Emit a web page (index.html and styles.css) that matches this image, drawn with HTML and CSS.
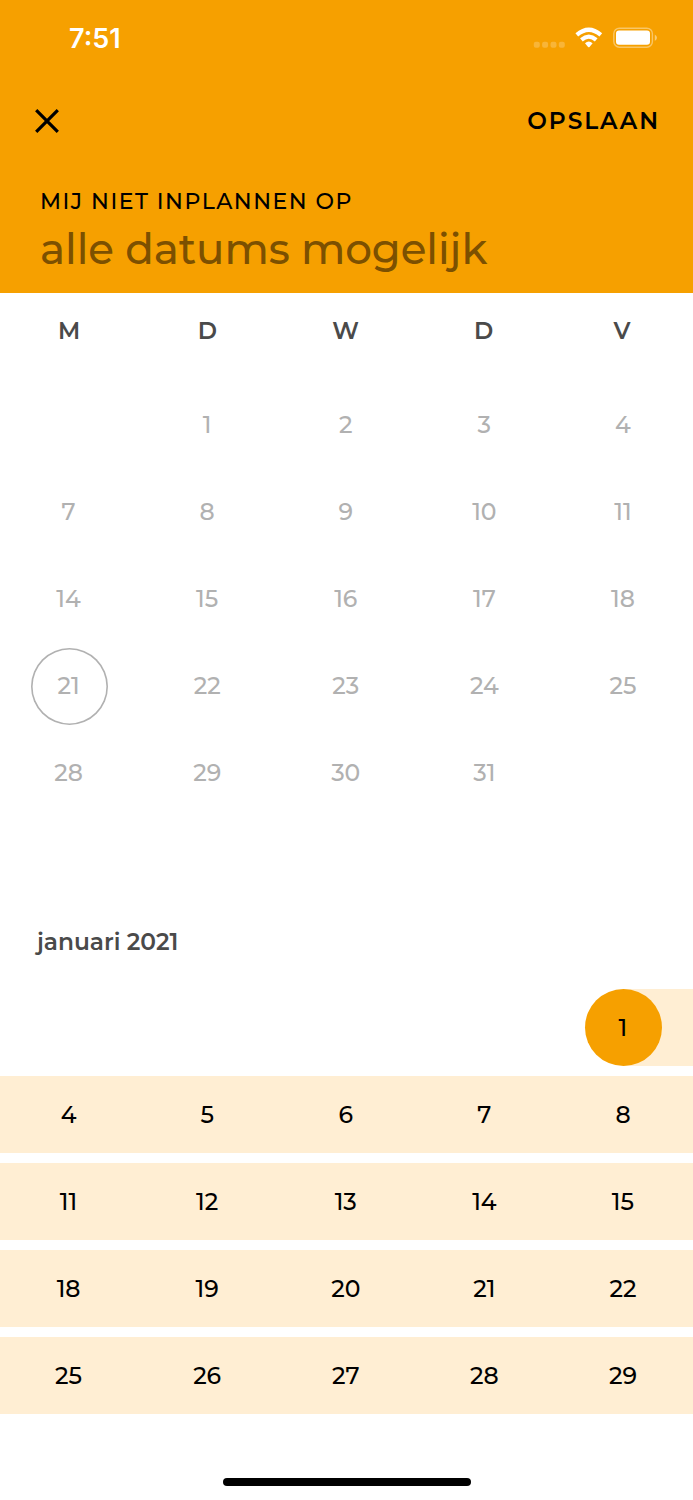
FILE: index.html
```html
<!DOCTYPE html>
<html lang="nl">
<head>
<meta charset="UTF-8">
<meta name="viewport" content="width=device-width, initial-scale=1.0">
<title>Mij niet inplannen op</title>
<link rel="stylesheet" href="styles.css">
</head>
<body>
<div class="app">
    <header class="header">
        <div class="status-bar">
            <span class="time">7:51</span>
            <svg class="status-icons" width="124" height="24" viewBox="0 0 124 24">
                <g fill="#fff" fill-opacity="0.22">
                    <rect x="0.8" y="15.8" width="6" height="6" rx="2"/>
                    <rect x="9.1" y="15.8" width="6" height="6" rx="2"/>
                    <rect x="17.5" y="15.8" width="6" height="6" rx="2"/>
                    <rect x="25.8" y="15.8" width="6" height="6" rx="2"/>
                </g>
                <g fill="none" stroke="#fff" stroke-width="4.2">
                    <path d="M43.8 8.8 Q55.8 -1.4 67.8 8.8"/>
                    <path d="M48.4 13.8 Q55.8 7.6 63.2 13.8"/>
                </g>
                <path d="M52 17.2 Q55.8 13.8 59.6 17.2 L56.5 20.9 Q55.8 21.7 55.1 20.9 Z" fill="#fff"/>
                <rect x="80.8" y="2.2" width="38.6" height="19" rx="5.6" fill="none" stroke="#fff" stroke-opacity="0.4" stroke-width="1.4"/>
                <rect x="83" y="4.5" width="34" height="14.3" rx="3" fill="#fff"/>
                <path d="M121.8 8.4 Q124 9.6 124 11.7 T121.8 15 Z" fill="#fff" fill-opacity="0.45"/>
            </svg>
        </div>
        <div class="toolbar">
            <svg class="close" width="26" height="26" viewBox="0 0 26 26">
                <path d="M2.2 2.2 L23.8 23.8 M23.8 2.2 L2.2 23.8" stroke="#000" stroke-width="3.2"/>
            </svg>
            <span class="save">OPSLAAN</span>
        </div>
        <div class="label">MIJ NIET INPLANNEN OP</div>
        <div class="value">alle datums mogelijk</div>
    </header>

    <div class="weekdays">
        <span>M</span><span>D</span><span>W</span><span>D</span><span>V</span>
    </div>

    <div class="month past">
        <div class="week"><span></span><span>1</span><span>2</span><span>3</span><span>4</span></div>
        <div class="week"><span>7</span><span>8</span><span>9</span><span>10</span><span>11</span></div>
        <div class="week"><span>14</span><span>15</span><span>16</span><span>17</span><span>18</span></div>
        <div class="week"><span class="marked"><b class="today">21</b></span><span>22</span><span>23</span><span>24</span><span>25</span></div>
        <div class="week"><span>28</span><span>29</span><span>30</span><span>31</span><span></span></div>
    </div>

    <h2 class="month-title">januari 2021</h2>

    <div class="month">
        <div class="week"><span></span><span></span><span></span><span></span><span class="marked range-start"><b class="selected">1</b></span></div>
        <div class="week in-range"><span>4</span><span>5</span><span>6</span><span>7</span><span>8</span></div>
        <div class="week in-range"><span>11</span><span>12</span><span>13</span><span>14</span><span>15</span></div>
        <div class="week in-range"><span>18</span><span>19</span><span>20</span><span>21</span><span>22</span></div>
        <div class="week in-range"><span>25</span><span>26</span><span>27</span><span>28</span><span>29</span></div>
    </div>

    <div class="home-indicator"></div>
</div>
</body>
</html>
```
FILE: styles.css
```css
* {
    box-sizing: border-box;
}
body {
    margin: 0;
    background-color: #fff;
    font-family: Montserrat, Inter, sans-serif;
    color: #000;
}
.app {
    width: 693px;
    height: 1500px;
    display: flex;
    flex-direction: column;
    overflow: hidden;
}
.header {
    height: 293px;
    background-color: #f6a000;
    white-space: nowrap;
}
.status-bar {
    display: flex;
    justify-content: space-between;
    align-items: center;
    height: 76px;
    padding: 0 36px 0 69px;
}
.time {
    color: #fff;
    font-family: Inter, sans-serif;
    font-size: 27px;
    font-weight: 600;
}
.toolbar {
    display: flex;
    justify-content: space-between;
    align-items: center;
    height: 90px;
    padding: 0 33px 0 34px;
}
.save {
    padding-bottom: 1px;
    font-size: 23.3px;
    font-weight: 600;
    letter-spacing: 1.9px;
}
.label {
    padding: 22px 0 0 40px;
    font-size: 22px;
    line-height: 28px;
    font-weight: 500;
    letter-spacing: 1.5px;
}
.value {
    padding-left: 40px;
    font-size: 42px;
    line-height: 66px;
    color: #7c5000;
    font-weight: 500;
    letter-spacing: -0.08px;
}
.weekdays {
    display: grid;
    grid-template-columns: repeat(5, 1fr);
    height: 94px;
    padding-right: 2px;
    line-height: 75px;
    font-size: 23.3px;
    font-weight: 600;
    text-align: center;
    color: #4a4a4a;
}
.month {
    display: flex;
    flex-direction: column;
    gap: 10px;
    font-size: 23.5px;
    font-weight: 500;
}
.week {
    display: grid;
    grid-template-columns: repeat(5, 1fr);
    height: 77px;
}
.week span {
    display: flex;
    justify-content: center;
    align-items: center;
    padding: 0 1.5px 1px 0;
}
.week .marked {
    padding: 0;
}
.week b {
    display: flex;
    justify-content: center;
    align-items: center;
    width: 77px;
    height: 77px;
    padding: 0 1.5px 1px 0;
    border-radius: 50%;
    font-weight: 500;
}
.past {
    color: #b1b1b1;
}
.past span,
.past .today {
    padding-bottom: 2px;
}
.past .marked {
    padding-bottom: 0;
}
.today {
    box-shadow: inset 0 0 0 1.6px #b1b1b1;
}
.in-range {
    background-color: #ffeed3;
}
.range-start {
    background: linear-gradient(to right, transparent 50%, #ffeed3 50%);
}
.selected {
    background-color: #f6a000;
}
.month-title {
    margin: 0;
    height: 177px;
    padding: 115px 0 0 37px;
    font-size: 23.3px;
    line-height: 30px;
    font-weight: 600;
    color: #4a4a4a;
}
.home-indicator {
    width: 248px;
    height: 8px;
    margin: 64px auto 0;
    border-radius: 4px;
    background-color: #000;
}
```
